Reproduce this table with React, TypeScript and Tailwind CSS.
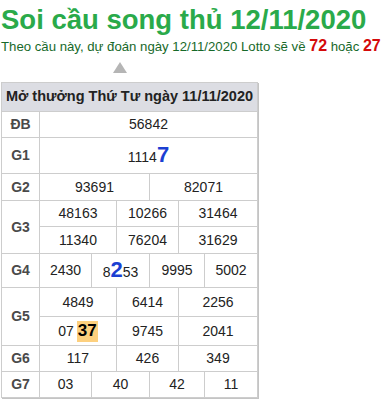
export default function App() {
  const cell = 'flex items-center justify-center';
  const line = 'border-[#cdcdcd]';

  return (
    <div className="min-h-screen bg-white font-['Liberation_Sans',Arial,sans-serif] text-[#222]">
      <h1 className="pl-px pt-[4px] text-[27.5px] font-bold leading-[31px] text-[#2aaa4a]">
        Soi cầu song thủ 12/11/2020
      </h1>
      <p className="mt-[2px] pl-px text-[13.2px] leading-[17px] text-[#17692a]">
        Theo cầu này, dự đoán ngày 12/11/2020 Lotto sẽ về{' '}
        <b className="text-[16px] text-[#d40a0a]">72</b> hoặc{' '}
        <b className="text-[16px] text-[#d40a0a]">27</b>
      </p>

      <div className="ml-[113px] mt-[7px] h-0 w-0 border-x-[7px] border-b-[11px] border-x-transparent border-b-[#b5b5b5]" />

      <div className={`ml-px mt-[9px] w-[257px] border ${line} shadow-[1px_1px_0_#c4c4c4]`}>
        <div className={`${cell} h-[29px] border-b ${line} bg-[#dcdde3] text-[14.5px] font-bold text-[#222]`}>
          Mở thưởng Thứ Tư ngày 11/11/2020
        </div>

        <Row label="ĐB" h="h-[26px]">
          <div className={`${cell} flex-1`}>56842</div>
        </Row>

        <Row label="G1" h="h-[36px]">
          <div className={`${cell} flex-1`}>
            <span>
              1114<b className="text-[22px] leading-none text-[#1b3fd2]">7</b>
            </span>
          </div>
        </Row>

        <Row label="G2" h="h-[27px]">
          <div className={`${cell} w-[110px] border-r ${line}`}>93691</div>
          <div className={`${cell} flex-1`}>82071</div>
        </Row>

        <Row label="G3" h="h-[53px]">
          <div className="flex flex-1 flex-col">
            <div className={`flex h-[26px] border-b ${line}`}>
              <div className={`${cell} w-[77px] border-r ${line}`}>48163</div>
              <div className={`${cell} w-[62px] border-r ${line}`}>10266</div>
              <div className={`${cell} flex-1`}>31464</div>
            </div>
            <div className="flex h-[26px]">
              <div className={`${cell} w-[77px] border-r ${line}`}>11340</div>
              <div className={`${cell} w-[62px] border-r ${line}`}>76204</div>
              <div className={`${cell} flex-1`}>31629</div>
            </div>
          </div>
        </Row>

        <Row label="G4" h="h-[34px]">
          <div className={`${cell} w-[52px] border-r ${line}`}>2430</div>
          <div className={`${cell} w-[58px] border-r ${line}`}>
            <span>
              8<b className="text-[22px] leading-none text-[#1b3fd2]">2</b>53
            </span>
          </div>
          <div className={`${cell} w-[55px] border-r ${line}`}>9995</div>
          <div className={`${cell} flex-1`}>5002</div>
        </Row>

        <Row label="G5" h="h-[58px]">
          <div className="flex flex-1 flex-col">
            <div className={`flex h-[29px] border-b ${line}`}>
              <div className={`${cell} w-[77px] border-r ${line}`}>4849</div>
              <div className={`${cell} w-[62px] border-r ${line}`}>6414</div>
              <div className={`${cell} flex-1`}>2256</div>
            </div>
            <div className="flex h-[28px]">
              <div className={`${cell} w-[77px] gap-[3px] border-r ${line}`}>
                <span>07</span>
                <b className="flex h-[21px] w-[21px] items-center justify-center bg-[#fdd07e] text-[17px] text-black">37</b>
              </div>
              <div className={`${cell} w-[62px] border-r ${line}`}>9745</div>
              <div className={`${cell} flex-1`}>2041</div>
            </div>
          </div>
        </Row>

        <Row label="G6" h="h-[26px]">
          <div className={`${cell} w-[77px] border-r ${line}`}>117</div>
          <div className={`${cell} w-[62px] border-r ${line}`}>426</div>
          <div className={`${cell} flex-1`}>349</div>
        </Row>

        <Row label="G7" h="h-[25px]" last>
          <div className={`${cell} w-[52px] border-r ${line}`}>03</div>
          <div className={`${cell} w-[58px] border-r ${line}`}>40</div>
          <div className={`${cell} w-[55px] border-r ${line}`}>42</div>
          <div className={`${cell} flex-1`}>11</div>
        </Row>
      </div>
    </div>
  );
}

function Row({ label, h, last, children }: { label: string; h: string; last?: boolean; children: React.ReactNode }) {
  return (
    <div className={`flex ${h} ${last ? '' : 'border-b'} border-[#cdcdcd] text-[14px]`}>
      <div className="flex w-[38px] items-center justify-center border-r border-[#cdcdcd] font-bold text-[#4a4a4a]">
        {label}
      </div>
      {children}
    </div>
  );
}
